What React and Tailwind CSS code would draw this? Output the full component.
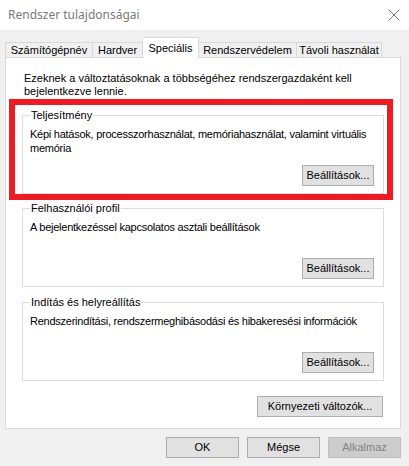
import React from "react";

const font = { fontFamily: '"Liberation Sans", Arial, sans-serif' };

function Btn({ children, className = "", disabled = false }) {
  return (
    <div
      className={
        "flex items-center justify-center h-[21px] border text-[11px] whitespace-nowrap " +
        (disabled
          ? "bg-[#cccccc] border-[#bfbfbf] text-[#838383] "
          : "bg-[#e1e1e1] border-[#adadad] text-black ") +
        className
      }
    >
      {children}
    </div>
  );
}

function Group({ title, text, className = "" }) {
  return (
    <div
      className={
        "border border-[#dcdcdc] mx-[16px] pl-[7px] pr-[9px] pb-[7px] h-[79px] flex flex-col " +
        className
      }
    >
      <span className="-mt-[7px] ml-[0px] px-[1px] self-start bg-white leading-[13px] text-[11px] text-black">
        {title}
      </span>
      <div className="mt-[5px] leading-[14px] text-[11px] tracking-[-0.25px] text-black whitespace-nowrap">
        {text}
      </div>
      <div className="mt-auto flex justify-end">
        <Btn className="w-[72px]">Beállítások...</Btn>
      </div>
    </div>
  );
}

export default function App() {
  return (
    <div
      className="w-[409px] h-[466px] bg-[#f0f0f0] flex flex-col relative overflow-hidden"
      style={font}
    >
      {/* Title bar */}
      <div className="h-[30px] bg-white flex items-center justify-between pl-[8px] pr-[9px]">
        <span
          className="text-[12px] text-[#7a7a7a]"
          style={{ fontFamily: '"Noto Sans", "Liberation Sans", sans-serif' }}
        >
          Rendszer tulajdonságai
        </span>
        <svg width="12" height="12" viewBox="0 0 12 12">
          <path d="M0.5 0.5 L11.5 11.5 M11.5 0.5 L0.5 11.5" stroke="#7a7a7a" strokeWidth="1" />
        </svg>
      </div>

      {/* Tabs */}
      <div className="mt-[7px] ml-[5px] flex items-end h-[20px] text-[11px] text-black">
        <div className="h-[15px] w-[88px] border border-b-0 border-[#d9d9d9] bg-[#f0f0f0] flex items-center justify-center">
          Számítógépnév
        </div>
        <div className="h-[15px] w-[50px] border border-b-0 border-l-0 border-[#d9d9d9] bg-[#f0f0f0] flex items-center justify-center">
          Hardver
        </div>
        <div className="h-[21px] w-[56px] -mb-[1px] border border-b-0 border-l-0 border-[#d9d9d9] bg-white flex items-start justify-center pt-[2px] z-10">
          Speciális
        </div>
        <div className="h-[15px] w-[98px] border border-b-0 border-l-0 border-[#d9d9d9] bg-[#f0f0f0] flex items-center justify-center">
          Rendszervédelem
        </div>
        <div className="h-[15px] w-[85px] border border-b-0 border-l-0 border-[#d9d9d9] bg-[#f0f0f0] flex items-center justify-center">
          Távoli használat
        </div>
      </div>

      {/* Panel */}
      <div className="ml-[5px] w-[396px] h-[372px] bg-white border border-[#d9d9d9] flex flex-col">
        <div className="mt-[14px] ml-[18px] leading-[13px] text-[11px] text-black">
          Ezeknek a változtatásoknak a többségéhez rendszergazdaként kell
          <br />
          bejelentkezve lennie.
        </div>
        <Group
          className="mt-[17px]"
          title="Teljesítmény"
          text={
            <>
              Képi hatások, processzorhasználat, memóriahasználat, valamint virtuális
              <br />
              memória
            </>
          }
        />
        <Group
          className="mt-[14px]"
          title="Felhasználói profil"
          text="A bejelentkezéssel kapcsolatos asztali beállítások"
        />
        <Group
          className="mt-[15px]"
          title="Indítás és helyreállítás"
          text="Rendszerindítási, rendszermeghibásodási és hibakeresési információk"
        />
        <div className="mt-[15px] mr-[17px] flex justify-end">
          <Btn className="w-[126px]">Környezeti változók...</Btn>
        </div>
      </div>

      {/* Bottom buttons */}
      <div className="mt-[8px] mr-[8px] flex justify-end gap-[8px]">
        <Btn className="w-[73px]">OK</Btn>
        <Btn className="w-[73px]">Mégse</Btn>
        <Btn className="w-[73px]" disabled>
          Alkalmaz
        </Btn>
      </div>

      {/* Red annotation */}
      <div className="absolute left-[9px] top-[99px] w-[384px] h-[101px] border-[6px] border-[#ed1c24] pointer-events-none" />
    </div>
  );
}
